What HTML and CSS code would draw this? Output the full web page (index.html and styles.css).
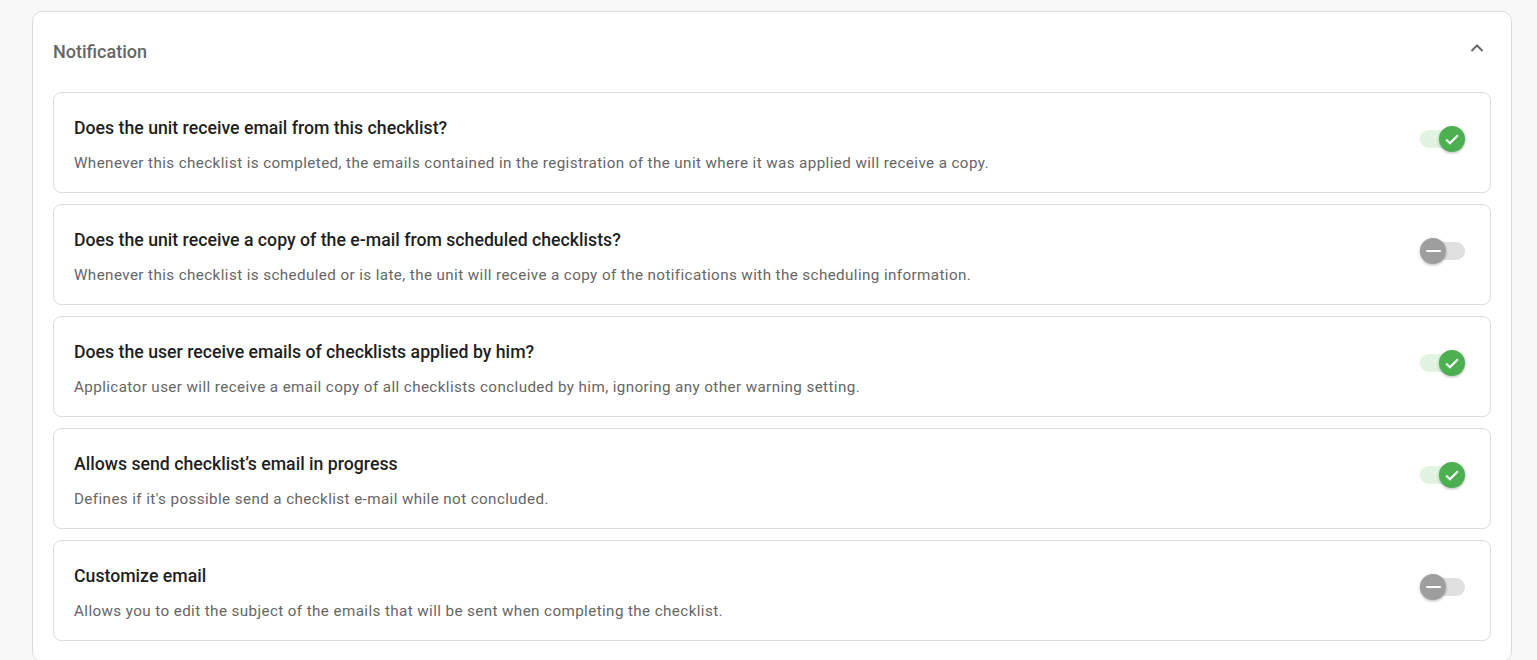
FILE: index.html
```html
<!DOCTYPE html>
<html lang="en">
<head>
<meta charset="utf-8">
<title>Notification</title>
<link rel="stylesheet" href="styles.css">
</head>
<body>
<div class="page">
  <section class="panel">
    <header class="panel-header">
      <h2 class="panel-title">Notification</h2>
      <button class="collapse" aria-label="Collapse">
        <svg viewBox="0 0 24 24" width="24" height="24"><path d="M6.5 15 12 9.5 17.5 15" fill="none" stroke="#666" stroke-width="2"/></svg>
      </button>
    </header>
    <div class="items">
      <div class="item">
        <div class="item-text">
          <div class="item-title">Does the unit receive email from this checklist?</div>
          <div class="item-desc">Whenever this checklist is completed, the emails contained in the registration of the unit where it was applied will receive a copy.</div>
        </div>
        <div class="toggle on"><span class="track"></span><span class="thumb"><svg viewBox="0 0 24 24" width="20" height="20"><path d="M5 12.5l4.5 4.5L19 7.5" fill="none" stroke="#fff" stroke-width="2.6"/></svg></span></div>
      </div>
      <div class="item">
        <div class="item-text">
          <div class="item-title">Does the unit receive a copy of the e-mail from scheduled checklists?</div>
          <div class="item-desc">Whenever this checklist is scheduled or is late, the unit will receive a copy of the notifications with the scheduling information.</div>
        </div>
        <div class="toggle off"><span class="track"></span><span class="thumb"><span class="dash"></span></span></div>
      </div>
      <div class="item">
        <div class="item-text">
          <div class="item-title">Does the user receive emails of checklists applied by him?</div>
          <div class="item-desc">Applicator user will receive a email copy of all checklists concluded by him, ignoring any other warning setting.</div>
        </div>
        <div class="toggle on"><span class="track"></span><span class="thumb"><svg viewBox="0 0 24 24" width="20" height="20"><path d="M5 12.5l4.5 4.5L19 7.5" fill="none" stroke="#fff" stroke-width="2.6"/></svg></span></div>
      </div>
      <div class="item">
        <div class="item-text">
          <div class="item-title">Allows send checklist’s email in progress</div>
          <div class="item-desc">Defines if it's possible send a checklist e-mail while not concluded.</div>
        </div>
        <div class="toggle on"><span class="track"></span><span class="thumb"><svg viewBox="0 0 24 24" width="20" height="20"><path d="M5 12.5l4.5 4.5L19 7.5" fill="none" stroke="#fff" stroke-width="2.6"/></svg></span></div>
      </div>
      <div class="item">
        <div class="item-text">
          <div class="item-title">Customize email</div>
          <div class="item-desc">Allows you to edit the subject of the emails that will be sent when completing the checklist.</div>
        </div>
        <div class="toggle off"><span class="track"></span><span class="thumb"><span class="dash"></span></span></div>
      </div>
    </div>
  </section>
</div>
</body>
</html>
```
FILE: styles.css
```css
html, body {
  margin: 0;
  padding: 0;
  background: #f8f8f8;
  font-family: Roboto, "Liberation Sans", sans-serif;
  overflow: hidden;
}
.page {
  padding: 11px 25px 0 32px;
  height: 660px;
  box-sizing: border-box;
}
.panel {
  background: #fff;
  border: 1px solid #dddddd;
  border-radius: 10px;
  padding: 0 20px 20px 20px;
}
.panel-header {
  display: flex;
  align-items: center;
  justify-content: space-between;
  padding-top: 28px;
  margin-bottom: 28px;
  height: 24px;
}
.panel-title {
  margin: 0;
  font-size: 18px;
  line-height: 24px;
  font-weight: 500;
  color: #666666;
}
.collapse {
  border: 0;
  background: none;
  padding: 0;
  width: 24px;
  height: 24px;
  margin-right: 2px;
  margin-top: -8px;
  cursor: pointer;
}
.items {
  display: flex;
  flex-direction: column;
  gap: 11px;
}
.item {
  display: flex;
  align-items: center;
  justify-content: space-between;
  border: 1px solid #dddddd;
  border-radius: 8px;
  padding: 23px 25px 19px 20px;
}
.item-title {
  font-size: 17.7px;
  line-height: 24px;
  font-weight: 500;
  color: #1f1f1f;
}
.item-desc {
  margin-top: 13px;
  font-size: 15.2px;
  line-height: 20px;
  color: #666666;
  letter-spacing: 0.4px;
}
.toggle {
  position: relative;
  width: 45px;
  height: 26px;
  flex: none;
  margin-top: -12px;
}
.track {
  position: absolute;
  left: 0;
  top: 4px;
  width: 45px;
  height: 18px;
  border-radius: 9px;
}
.thumb {
  position: absolute;
  top: 0;
  width: 26px;
  height: 26px;
  border-radius: 50%;
  display: flex;
  align-items: center;
  justify-content: center;
  box-shadow: 0 1px 3px rgba(0,0,0,0.3);
}
.toggle.on .track { background: #e2f3e2; }
.toggle.on .thumb { right: 0; background: #4caf50; }
.toggle.off .track { background: #e0e0e0; }
.toggle.off .thumb { left: 0; background: #9e9e9e; }
.dash {
  width: 15px;
  height: 2px;
  background: #fff;
  border-radius: 1px;
}
```
